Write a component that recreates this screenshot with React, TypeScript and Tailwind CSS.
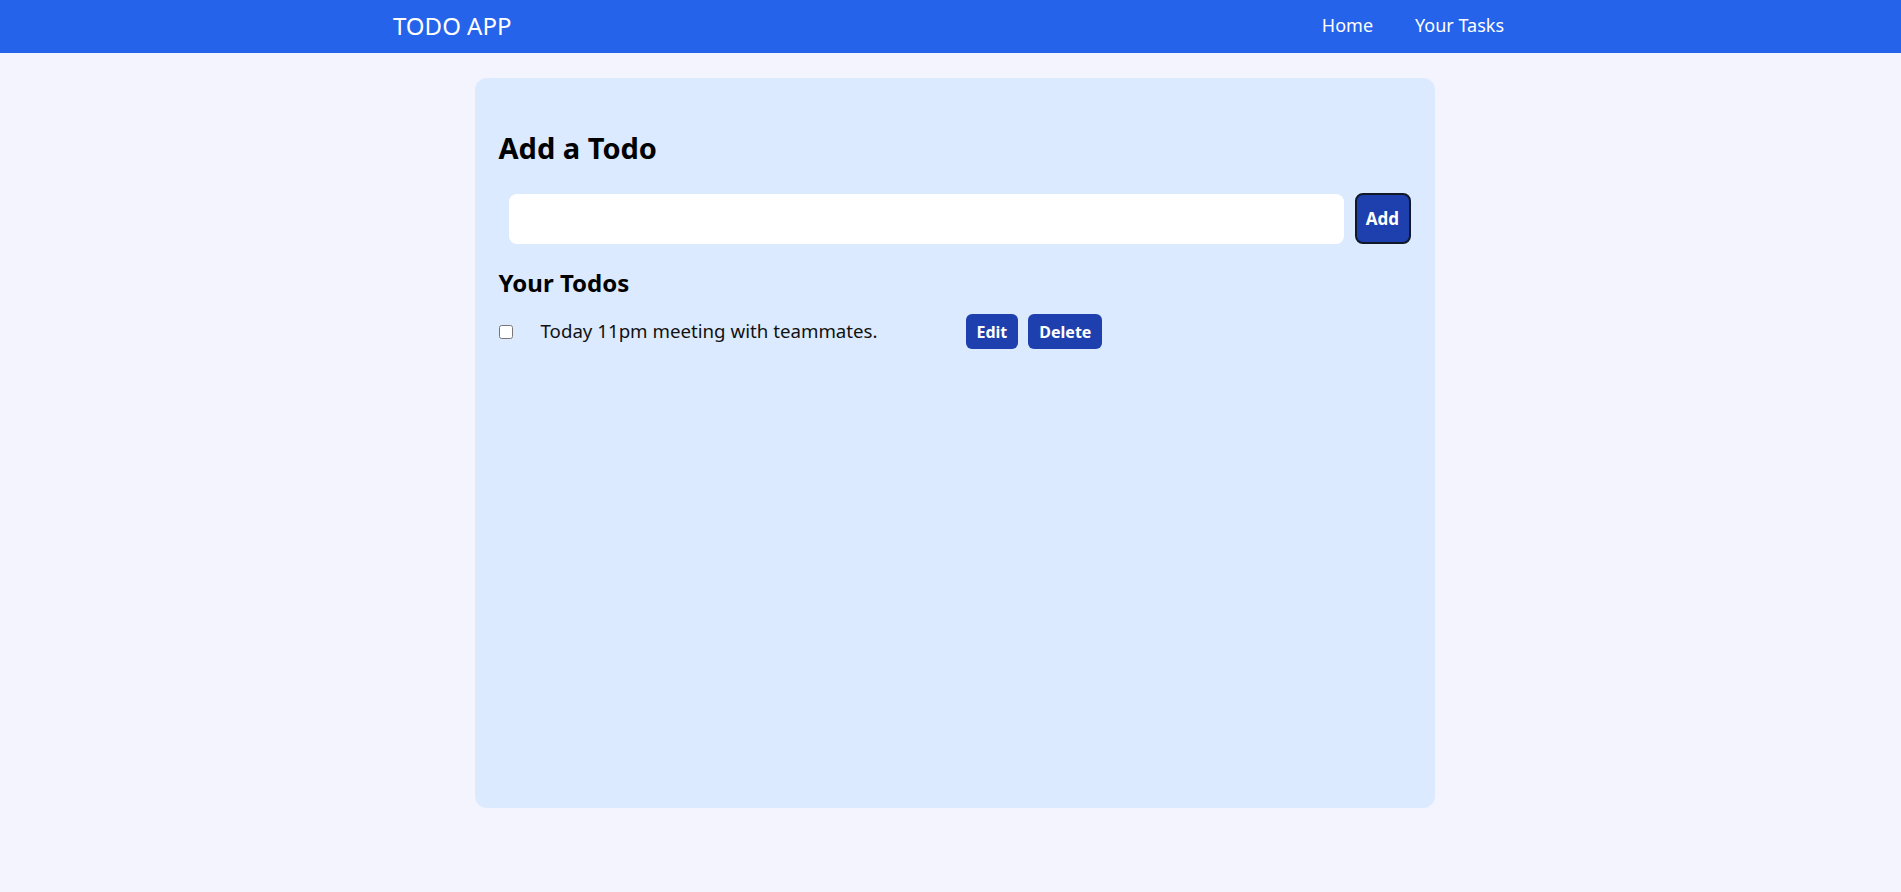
export default function App() {
  return (
    <div
      className="min-h-screen bg-[#f4f4fe] text-black"
      style={{ fontFamily: '"Noto Sans", "Open Sans", sans-serif' }}
    >
      {/* Navbar */}
      <nav className="flex h-[53px] items-center justify-between bg-[#2563eb] pl-[393px] pr-[397px] text-white">
        <div className="pb-0.5 text-2xl">TODO APP</div>
        <ul className="flex gap-[42px] pb-1 text-lg">
          <li className="cursor-pointer">Home</li>
          <li className="cursor-pointer">Your Tasks</li>
        </ul>
      </nav>

      {/* Card */}
      <div className="pl-2">
        <div className="mx-auto mt-[25px] h-[730px] w-[960px] rounded-xl bg-[#dbeafe] px-6 pt-6">
          <h2 className="mt-7 text-[29px] font-bold leading-9">Add a Todo</h2>

          <div className="mt-[27px] flex items-center">
            <input
              type="text"
              className="ml-2.5 mr-[11px] h-[50px] flex-1 rounded-lg bg-white px-4 outline-none"
            />
            <button className="h-[51px] w-14 rounded-lg border-2 border-[#111827] bg-[#1e40af] text-[17px] font-bold text-white">
              Add
            </button>
          </div>

          <h2 className="mt-[23px] text-2xl font-bold leading-8">Your Todos</h2>

          {/* Todos */}
          <div className="mt-[15px] flex items-center">
            <input type="checkbox" className="m-0 h-3.5 w-3.5" />
            <div className="ml-7 w-[425px] text-[18.7px] text-[#111]">Today 11pm meeting with teammates.</div>
            <div className="flex gap-2.5">
              <button className="h-[35px] rounded-md bg-[#1e40af] px-[11px] text-base font-bold text-white">
                Edit
              </button>
              <button className="h-[35px] rounded-md bg-[#1e40af] px-[11px] text-base font-bold text-white">
                Delete
              </button>
            </div>
          </div>
        </div>
      </div>
    </div>
  );
}
